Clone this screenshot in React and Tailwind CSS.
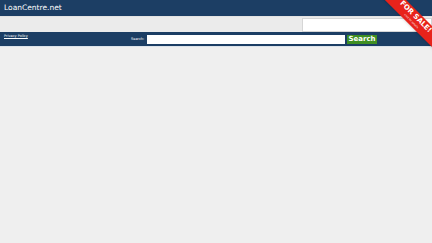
import React from 'react';

const App = () => {
  return (
    <div className="relative min-h-[243px] w-full overflow-hidden bg-[#efefef] font-['DejaVu_Sans',sans-serif]">
      {/* header */}
      <header className="flex h-[16px] items-center bg-[#1c3e64] px-[4px]">
        <a href="#" className="text-[7.5px] leading-none text-white">LoanCentre.net</a>
      </header>

      {/* upper band */}
      <div className="flex h-[16px] items-center justify-end bg-[#ebebeb] border-t border-[#e2e2e2]">
        <input type="text" className="h-[14px] w-[130px] border border-[#d6d6d6] bg-white outline-none" />
      </div>

      {/* nav bar */}
      <nav className="flex h-[14px] items-start bg-[#1c3e64] px-[4px]">
        <a href="#" className="mt-[3px] w-[127px] text-[3.5px] leading-none text-white underline">Privacy Policy</a>
        <form className="mt-[3px] flex items-center gap-[1px]" onSubmit={(e) => e.preventDefault()}>
          <label className="w-[15px] text-[3.5px] leading-none text-white">Search:</label>
          <input type="text" className="h-[9px] w-[198px] bg-white outline-none" />
          <button type="submit" className="ml-[1px] h-[9px] w-[30px] bg-[#3f8f22] text-[7px] font-bold leading-none text-white">
            Search
          </button>
        </form>
      </nav>
      <div className="h-[1px] bg-[#dce3ea]"></div>

      {/* for sale ribbon */}
      <div className="absolute right-0 top-0 h-[52px] w-[52px] overflow-hidden">
        <a
          href="#"
          className="absolute left-[-8px] top-[11px] flex h-[15px] w-[84px] rotate-45 flex-col items-center justify-center gap-[1px] bg-[#e8231b] text-white shadow"
        >
          <span className="text-[7px] font-bold leading-[7px]">FOR SALE!</span>
          <span className="text-[2.5px] leading-[3px]">click for details</span>
        </a>
      </div>
    </div>
  );
};

export default App;
